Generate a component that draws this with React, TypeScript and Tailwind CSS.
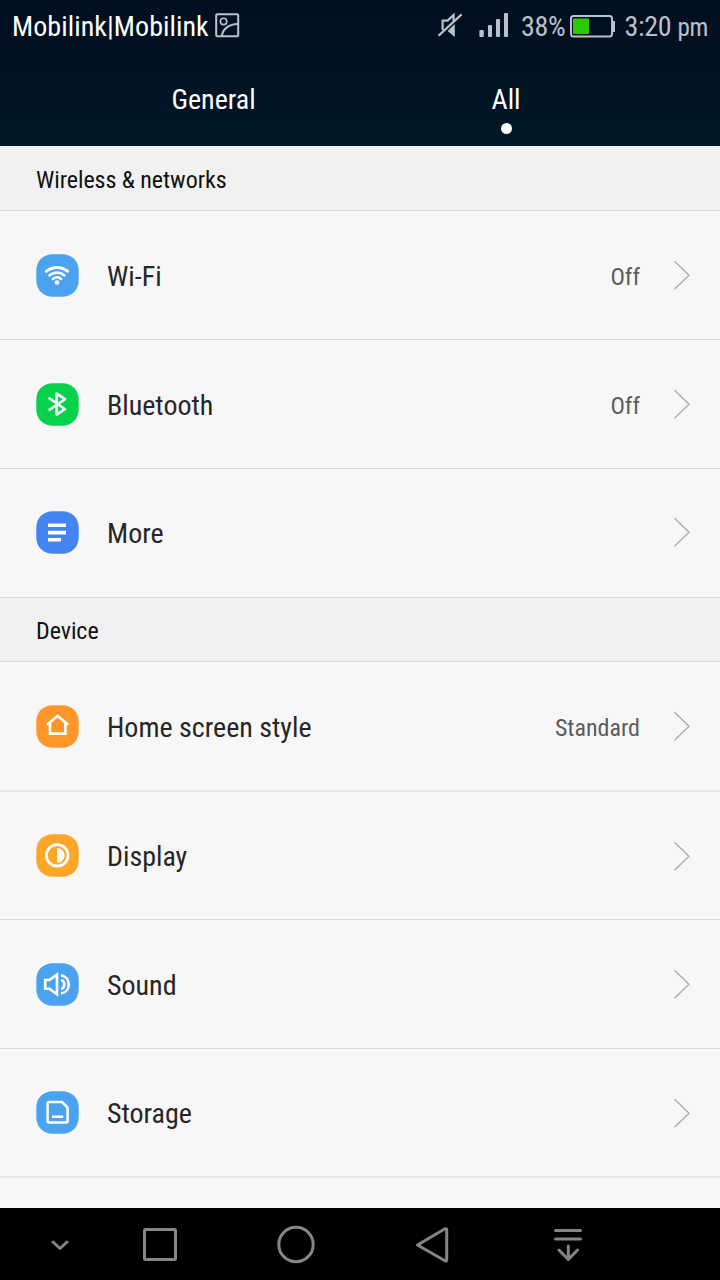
import type { ReactNode } from "react";

type Item = {
  label: string;
  color: string;
  icon: ReactNode;
  height: string;
  value?: string;
};

function Tile({ color, children }: { color: string; children: ReactNode }) {
  return (
    <svg width="43" height="43" viewBox="0 0 43 43" fill="none" className="shrink-0">
      <path
        d="M0.3 21.5 V17 C0.3 7 7 0.3 17 0.3 H26 C36 0.3 42.7 7 42.7 17 V26 C42.7 36 36 42.7 26 42.7 H17 C7 42.7 0.3 36 0.3 26 Z"
        fill={color}
      />
      <g stroke="#fff">{children}</g>
    </svg>
  );
}

const wifiIcon = (
  <>
    <path d="M10.3 17.4 C16.5 12.2 25.5 12.2 31.7 17.4" strokeWidth="2.8" strokeLinecap="round" />
    <path d="M13.6 21.3 C18 17.6 24 17.6 28.4 21.3" strokeWidth="2.7" strokeLinecap="round" />
    <path d="M16.9 24.9 C19.4 22.9 22.6 22.9 25.1 24.9" strokeWidth="2.6" strokeLinecap="round" />
    <circle cx="21" cy="28.5" r="2.3" fill="#fff" stroke="none" />
  </>
);

const bluetoothIcon = (
  <path d="M12.6 14.8 L29 26.2 L20.6 31.6 V10.6 L29 16.2 L12.6 27.4" strokeWidth="2.6" strokeLinejoin="round" />
);

const moreIcon = <path d="M12 14.3 H30 M12 21.6 H30 M12 28.8 H25" strokeWidth="3.6" />;

const homeIcon = (
  <path d="M11.8 19 L21.6 10.9 L31.4 19 M14 17.5 V28.6 H29.4 V17.5" strokeWidth="2.6" strokeLinecap="round" />
);

const displayIcon = (
  <>
    <circle cx="21.2" cy="21.4" r="10.8" strokeWidth="2.7" />
    <path d="M21.2 14 A7.4 7.4 0 0 1 21.2 28.8 Z" fill="#fff" stroke="none" />
  </>
);

const soundIcon = (
  <>
    <path d="M9.2 17 H13.4 L21 11.6 V31.2 L13.4 25.8 H9.2 Z" strokeWidth="2.6" />
    <path d="M25 12.4 C35.3 13.5 35.3 29.3 25 30.4" strokeWidth="2.6" />
    <path d="M25 17 C29.4 18 29.4 25 25 25.8" strokeWidth="2.5" />
  </>
);

const storageIcon = (
  <path d="M13 11 H26 L31.6 16.6 V30 Q31.6 31.4 30.2 31.4 H13 Q11.6 31.4 11.6 30 V12.4 Q11.6 11 13 11 Z M16 25.8 H27.2" strokeWidth="2.5" />
);

const wireless: Item[] = [
  { label: "Wi-Fi", color: "#4ba3ef", icon: wifiIcon, value: "Off", height: "h-[129px] border-b border-[#d9d9d9]" },
  { label: "Bluetooth", color: "#05d24a", icon: bluetoothIcon, value: "Off", height: "h-[129px] border-b border-[#d9d9d9]" },
  { label: "More", color: "#4285f0", icon: moreIcon, height: "h-[129px] border-b border-[#d9d9d9] pb-0.5" },
];

const device: Item[] = [
  { label: "Home screen style", color: "#ff962a", icon: homeIcon, value: "Standard", height: "h-[130px] border-b-2 border-[#e7e7e7]" },
  { label: "Display", color: "#ffa628", icon: displayIcon, height: "h-[128px] border-b border-[#d9d9d9]" },
  { label: "Sound", color: "#4ba3ef", icon: soundIcon, height: "h-[129px] border-b border-[#d9d9d9]" },
  { label: "Storage", color: "#4ba3ef", icon: storageIcon, height: "h-[129px] border-b-2 border-[#e7e7e7]" },
];

function Row({ item }: { item: Item }) {
  return (
    <div className={`flex items-center pl-9 pr-[29px] ${item.height}`}>
      <Tile color={item.color}>{item.icon}</Tile>
      <span className="ml-7 grow pt-[3px] text-[28px] leading-8 text-[#262626]">{item.label}</span>
      {item.value && <span className="mr-[33px] pt-[3px] text-2xl leading-8 text-[#5c5c5c]">{item.value}</span>}
      <svg width="18" height="30" viewBox="0 0 18 30" fill="none" stroke="#a9a9a9" strokeWidth="1.3">
        <path d="M1.5 1.2 L16 15.2 L1.5 29.2" />
      </svg>
    </div>
  );
}

function SectionTitle({ title, height }: { title: string; height: string }) {
  return (
    <h2 className={`flex items-center border-b border-[#d9d9d9] bg-[#f1f1f1] pl-9 text-2xl tracking-[-0.05px] text-[#111] ${height}`}>
      {title}
    </h2>
  );
}

function StatusBar() {
  return (
    <div className="flex h-[52px] items-center px-3 text-[28px] leading-8 text-[#b9c2ca]">
      <span className="pt-0.5 tracking-[0.06px] text-white">Mobilink|Mobilink</span>
      <svg width="25" height="25" viewBox="0 0 25 25" fill="none" stroke="#b9c2ca" strokeWidth="2" className="ml-1.5 mb-0.5">
        <rect x="1.2" y="1.2" width="22" height="22" rx="1" />
        <circle cx="8.6" cy="8.4" r="3.2" strokeWidth="1.6" />
        <path d="M7 23 C7.5 16 14 11 23 11" />
      </svg>
      <div className="grow" />
      {/* muted ringer */}
      <svg width="25" height="26" viewBox="0 0 25 26" fill="none" stroke="#b9c2ca" strokeWidth="2.2" className="mb-0.5 mr-4">
        <path d="M4.6 18 V8.6 H9.6 L15.6 3 V9" />
        <path d="M0.6 23.8 L23.6 2.4" />
        <path d="M16.8 12 V25 L9.6 19 Z" fill="#b9c2ca" stroke="none" />
      </svg>
      <svg width="30" height="26" viewBox="0 0 30 26" fill="#b9c2ca" className="mb-0.5 mr-3">
        <rect x="0.4" y="18" width="4.4" height="7" rx="1" />
        <rect x="9" y="13" width="4" height="12" rx="1" />
        <rect x="17" y="7" width="4" height="18" rx="1" />
        <rect x="25" y="1" width="4" height="24" rx="1" />
      </svg>
      <span className="pt-0.5 tracking-[-0.25px]">38%</span>
      <svg width="46" height="23" viewBox="0 0 46 23" fill="none" className="ml-1 mr-[9px]">
        <rect x="1" y="1" width="41" height="20.5" rx="2.5" stroke="#b9c2ca" strokeWidth="2" />
        <path d="M42.5 6 H45 V17 H42.5 Z" fill="#b9c2ca" />
        <rect x="3" y="3.5" width="16" height="15.5" fill="#2cc800" />
      </svg>
      <span className="pt-0.5 tracking-[-0.3px]">
        3:20 <span className="text-[25px]">pm</span>
      </span>
    </div>
  );
}

function Tabs() {
  return (
    <div className="flex grow px-[67px] text-[28px] leading-8 text-white">
      <div className="flex w-[293px] justify-center pt-8">General</div>
      <div className="flex w-[292px] flex-col items-center pt-8">
        All
        <span className="mt-[7px] h-[11px] w-[11px] rounded-full bg-white" />
      </div>
    </div>
  );
}

function NavBar() {
  return (
    <div className="h-[72px] bg-black">
      <svg width="720" height="72" viewBox="0 0 720 72" fill="none" stroke="#858585" strokeWidth="3" strokeLinecap="round" strokeLinejoin="round">
        <path d="M53 34 L60 40.5 L67 34" />
        <rect x="144.5" y="21.5" width="31" height="30" rx="1" />
        <circle cx="296" cy="36.5" r="17.2" />
        <path d="M417.5 37 L445 20.8 Q446.7 20.2 446.7 22 V51.5 Q446.7 53.8 445 52.8 Z" />
        <path d="M555.5 22.5 H580.5 M555.5 31 H580.5 M568.3 38 V51.5 M559 42 L568.3 51.5 L577.5 42" />
      </svg>
    </div>
  );
}

export default function App() {
  return (
    <main className="flex h-[1280px] w-[720px] flex-col overflow-hidden bg-[#f7f7f7] font-['Roboto_Condensed',Roboto,sans-serif] [font-stretch:75%]">
      <header className="flex h-[146px] flex-col bg-linear-to-b from-[#010f20] to-[#011726]">
        <StatusBar />
        <Tabs />
      </header>
      <div className="h-[1062px] overflow-hidden">
        <SectionTitle title="Wireless & networks" height="h-[65px] pt-1" />
        {wireless.map(item => (
          <Row key={item.label} item={item} />
        ))}
        <SectionTitle title="Device" height="h-16 pt-[3px]" />
        {device.map(item => (
          <Row key={item.label} item={item} />
        ))}
      </div>
      <NavBar />
    </main>
  );
}
